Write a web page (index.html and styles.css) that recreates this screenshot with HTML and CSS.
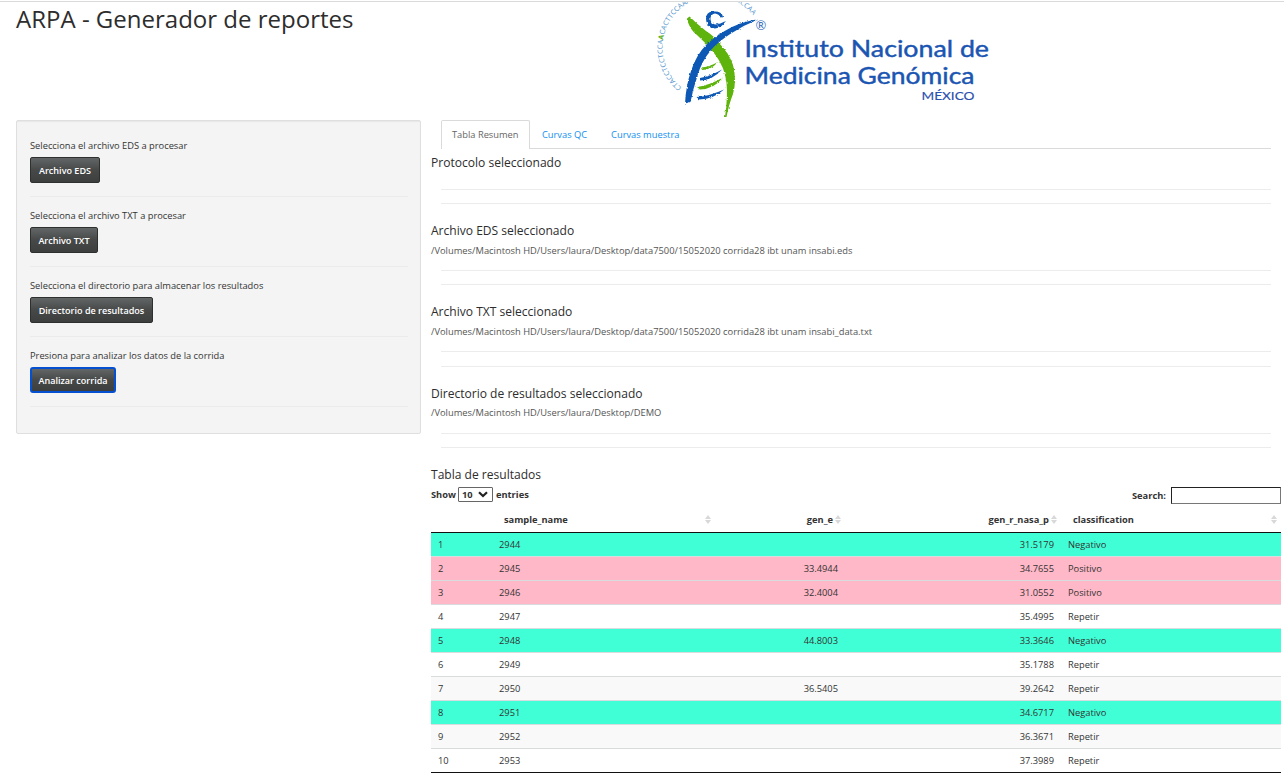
FILE: index.html
```html
<!DOCTYPE html>
<html lang="es">
<head>
<meta charset="utf-8">
<title>ARPA - Generador de reportes</title>
<link rel="stylesheet" href="styles.css">
</head>
<body>
<header class="header">
  <h1 class="title">ARPA - Generador de reportes</h1>
  <svg class="logo" width="360" height="118" viewBox="640 2 360 118" role="img" aria-label="Instituto Nacional de Medicina Genómica">
    <defs>
      <path id="ring" d="M681.800 87.400A51 51 0 1 1 755 17.800"/>
      <filter id="brush" x="-10%" y="-10%" width="120%" height="120%">
        <feTurbulence type="fractalNoise" baseFrequency="0.45" numOctaves="2" seed="4"/>
        <feDisplacementMap in="SourceGraphic" scale="2.6" xChannelSelector="R" yChannelSelector="G"/>
      </filter>
    </defs>
    <text class="ring-text"><textPath href="#ring" textLength="171">CTACCTCCTCCA<tspan class="ring-mark">A</tspan>CACTTCCAAAGCTCCACCTCACCAA</textPath></text>
    <g filter="url(#brush)">
      <path class="green" d="M687 18.500L689.500 16.500Q697 24 706 31Q714 36 719 43Q729 53 733 65Q737 80 733 94Q729 104 726.500 117L725 117Q728 96 726.500 83Q725 67 714 53Q707 44 697 35Q689 29 687 18.500Z"/>
      <path class="blue" d="M758 19.500Q744 25 731 33.500Q719 41 711 50Q702 61 698 74Q693 89 690.500 102L685 103.500Q686 85 691 71Q696 55 707 44Q718 34 732 27Q744 21 758 19.500Z"/>
      <path class="blue" d="M714 11.500Q706 11 706 19Q706 28 715 28.500Q722 28 726 20.500Q720 24.500 715 24.500Q710 23 710.500 18Q711 14 715 13.500Q719 14 720.500 17.500L723 17Q722 11 714 11.500Z"/>
      <path class="green" d="M701 67.500Q709 67 718 62Q711 70 702 70Z"/>
      <path class="blue" d="M700 78Q711 76 722 69.500Q713 80 700 80.500Z"/>
      <path class="green" d="M697 87Q710 85 723 77.500Q714 89 700 89.500Z"/>
      <path class="blue" d="M696.500 97Q710 96 724 89.500Q714 99 699 99.500Z"/>
    </g>
    <text class="reg" x="755.500" y="30">®</text>
    <text class="name" x="744.500" y="57" textLength="244.500" lengthAdjust="spacingAndGlyphs">Instituto Nacional de</text>
    <text class="name" x="744.500" y="84" textLength="230" lengthAdjust="spacingAndGlyphs">Medicina Genómica</text>
    <text class="country" x="921.500" y="100" textLength="53" lengthAdjust="spacingAndGlyphs">MÉXICO</text>
  </svg>
</header>
<div class="layout">
  <aside class="panel">
    <div class="step"><label>Selecciona el archivo EDS a procesar</label><button class="btn w70">Archivo EDS</button></div>
    <div class="step"><label>Selecciona el archivo TXT a procesar</label><button class="btn w68">Archivo TXT</button></div>
    <div class="step"><label>Selecciona el directorio para almacenar los resultados</label><button class="btn w123">Directorio de resultados</button></div>
    <div class="step"><label>Presiona para analizar los datos de la corrida</label><button class="btn w86 active">Analizar corrida</button></div>
  </aside>
  <main class="main">
    <nav class="tabs"><a class="tab selected">Tabla Resumen</a><a class="tab">Curvas QC</a><a class="tab">Curvas muestra</a></nav>
    <section class="info first"><h2>Protocolo seleccionado</h2></section>
    <div class="rules"></div>
    <section class="info"><h2>Archivo EDS seleccionado</h2><p>/Volumes/Macintosh HD/Users/laura/Desktop/data7500/15052020 corrida28 ibt unam insabi.eds</p></section>
    <div class="rules"></div>
    <section class="info"><h2>Archivo TXT seleccionado</h2><p>/Volumes/Macintosh HD/Users/laura/Desktop/data7500/15052020 corrida28 ibt unam insabi_data.txt</p></section>
    <div class="rules tall"></div>
    <section class="info last"><h2>Directorio de resultados seleccionado</h2><p>/Volumes/Macintosh HD/Users/laura/Desktop/DEMO</p></section>
    <div class="rules"></div>
    <h2 class="table-title">Tabla de resultados</h2>
    <div class="controls">
      <div class="length">Show <span class="select">10 <svg width="10" height="7" viewBox="0 0 10 7"><path d="M1 1.200L5 5L9 1.200" fill="none" stroke="#222" stroke-width="2.200"/></svg></span> entries</div>
      <label class="search">Search: <input type="text"></label>
    </div>
    <table class="results">
      <colgroup><col class="c1"><col class="c2"><col class="c3"><col class="c4"><col class="c5"></colgroup>
      <thead><tr><th></th><th class="sort">sample_name</th><th class="sort num">gen_e</th><th class="sort num">gen_r_nasa_p</th><th class="sort">classification</th></tr></thead>
      <tbody>
        <tr class="neg"><td>1</td><td>2944</td><td></td><td>31.5179</td><td>Negativo</td></tr>
        <tr class="pos"><td>2</td><td>2945</td><td>33.4944</td><td>34.7655</td><td>Positivo</td></tr>
        <tr class="pos"><td>3</td><td>2946</td><td>32.4004</td><td>31.0552</td><td>Positivo</td></tr>
        <tr><td>4</td><td>2947</td><td></td><td>35.4995</td><td>Repetir</td></tr>
        <tr class="neg"><td>5</td><td>2948</td><td>44.8003</td><td>33.3646</td><td>Negativo</td></tr>
        <tr><td>6</td><td>2949</td><td></td><td>35.1788</td><td>Repetir</td></tr>
        <tr class="odd"><td>7</td><td>2950</td><td>36.5405</td><td>39.2642</td><td>Repetir</td></tr>
        <tr class="neg"><td>8</td><td>2951</td><td></td><td>34.6717</td><td>Negativo</td></tr>
        <tr class="odd"><td>9</td><td>2952</td><td></td><td>36.3671</td><td>Repetir</td></tr>
        <tr><td>10</td><td>2953</td><td></td><td>37.3989</td><td>Repetir</td></tr>
      </tbody>
    </table>
  </main>
</div>
</body>
</html>
```
FILE: styles.css
```css
* { box-sizing: border-box; }
body { margin: 0; height: 773px; overflow: hidden; background: #fff; color: #333; font: 9.3px/14px "Open Sans", sans-serif; border-top: 1px solid #fff; }
h1, h2, p { margin: 0; font-weight: 400; }
.header { display: flex; height: 119px; border-top: 1px solid #d9dbdb; padding-left: 16px; }
.title { width: 624px; font-size: 24.03px; line-height: 34px; color: #2d2d2d; }
.logo { display: block; flex: none; }
.ring-text { font: 7px "Open Sans", sans-serif; fill: #4d91cb; }
.ring-mark { fill: #58ab12; font-weight: 700; }
.green { fill: #5fb30b; }
.blue { fill: #1059b5; }
.reg { font: 13px Lato, sans-serif; fill: #3a70bc; }
.name { font: 400 23.4px Lato, sans-serif; fill: #1b55b2; stroke: #1b55b2; stroke-width: .45px; }
.country { font: 400 12.3px Lato, sans-serif; fill: #2b4fae; stroke: #2b4fae; stroke-width: .15px; }
.layout { display: flex; align-items: flex-start; gap: 10px; padding-left: 16px; }
.panel { width: 405px; height: 314px; padding: 17px 13px 0; background: #f4f4f4; border: 1px solid #dfdfdf; border-radius: 2px; box-shadow: inset 0 1px 1px rgba(0,0,0,.05); }
.step { width: 378px; height: 59px; margin-bottom: 11px; border-bottom: 1px solid #ebebeb; }
.step label { display: block; height: 19px; line-height: 15px; }
.btn { display: flex; align-items: center; justify-content: center; height: 26px; padding: 1px 0 0; border: 1px solid #2e2f2f; border-radius: 2px; background: linear-gradient(#636666, #474949 50%, #3d3f3f); color: #fff; font: 600 9.05px "Open Sans", sans-serif; white-space: nowrap; }
.btn.active { border: 2px solid #0550d0; border-radius: 3px; }
.w70 { width: 70px; } .w68 { width: 68px; } .w123 { width: 123px; } .w86 { width: 86px; }
.main { width: 850px; }
.tabs { display: flex; height: 29px; margin: 0 10px; border-bottom: 1px solid #dadada; }
.tab { height: 28px; padding: 0 12px; line-height: 29px; color: #1090f0; }
.tab.selected { width: 89px; height: 29px; padding: 0 10px; line-height: 27px; color: #666; background: #fff; border: 1px solid #dadada; border-bottom: 0; border-radius: 2px 2px 0 0; }
.info { height: 66px; padding-top: 18px; }
.info.first { height: 40px; padding-top: 5px; }
.info h2, .table-title { font-size: 12.05px; line-height: 18px; color: #2d2d2d; }
.info p { line-height: 20px; margin-top: 1px; font-size: 9.35px; color: #555; }
.info.last p { margin-top: 0; }
.rules { height: 15px; margin: 0 10px; border: solid #ececec; border-width: 1px 0; }
.rules.tall { height: 16px; }
.table-title { padding-top: 18px; height: 38px; }
.controls { display: flex; justify-content: space-between; height: 21px; font-weight: 700; font-size: 9.3px; }
.length { display: flex; height: 17px; gap: 3px; align-items: center; }
.select { display: inline-flex; width: 35px; height: 15px; margin-left: -1px; align-items: center; justify-content: space-between; padding: 0 4px 0 3px; border: 1px solid #666; border-radius: 1px; }
.search { display: flex; align-items: center; gap: 5px; height: 19px; }
.search input { width: 110px; height: 17px; margin-bottom: 1px; border: 1px solid #777; border-top-color: #222; border-left-color: #222; padding: 0; background: #fff; }
.results { width: 850px; table-layout: fixed; border-collapse: separate; border-spacing: 0; border-bottom: 1px solid #111; }
.c1 { width: 61px; } .c2 { width: 223px; } .c3 { width: 130px; } .c4 { width: 216px; } .c5 { width: 220px; }
.results th { position: relative; height: 26px; padding: 1px 12px 0; border-bottom: 1px solid #111; text-align: left; font-weight: 700; }
.results th.num { text-align: right; }
.sort::before, .sort::after { content: ""; position: absolute; right: 4px; border: solid transparent; border-width: 0 3px; }
.sort::before { top: 8px; border-bottom: 4px solid #d8d8d8; }
.sort::after { top: 13px; border-top: 4px solid #d8d8d8; }
.results td { height: 24px; padding: 0 7px; border-top: 1px solid #d9dcdc; line-height: 14px; }
.results tbody tr:first-child td { height: 23px; border-top: 0; }
.results td:nth-child(3), .results td:nth-child(4) { text-align: right; }
.neg td { background: #40ffd6; }
.pos td { background: #ffb8c8; }
.odd td { background: #f9f9f9; }
```
